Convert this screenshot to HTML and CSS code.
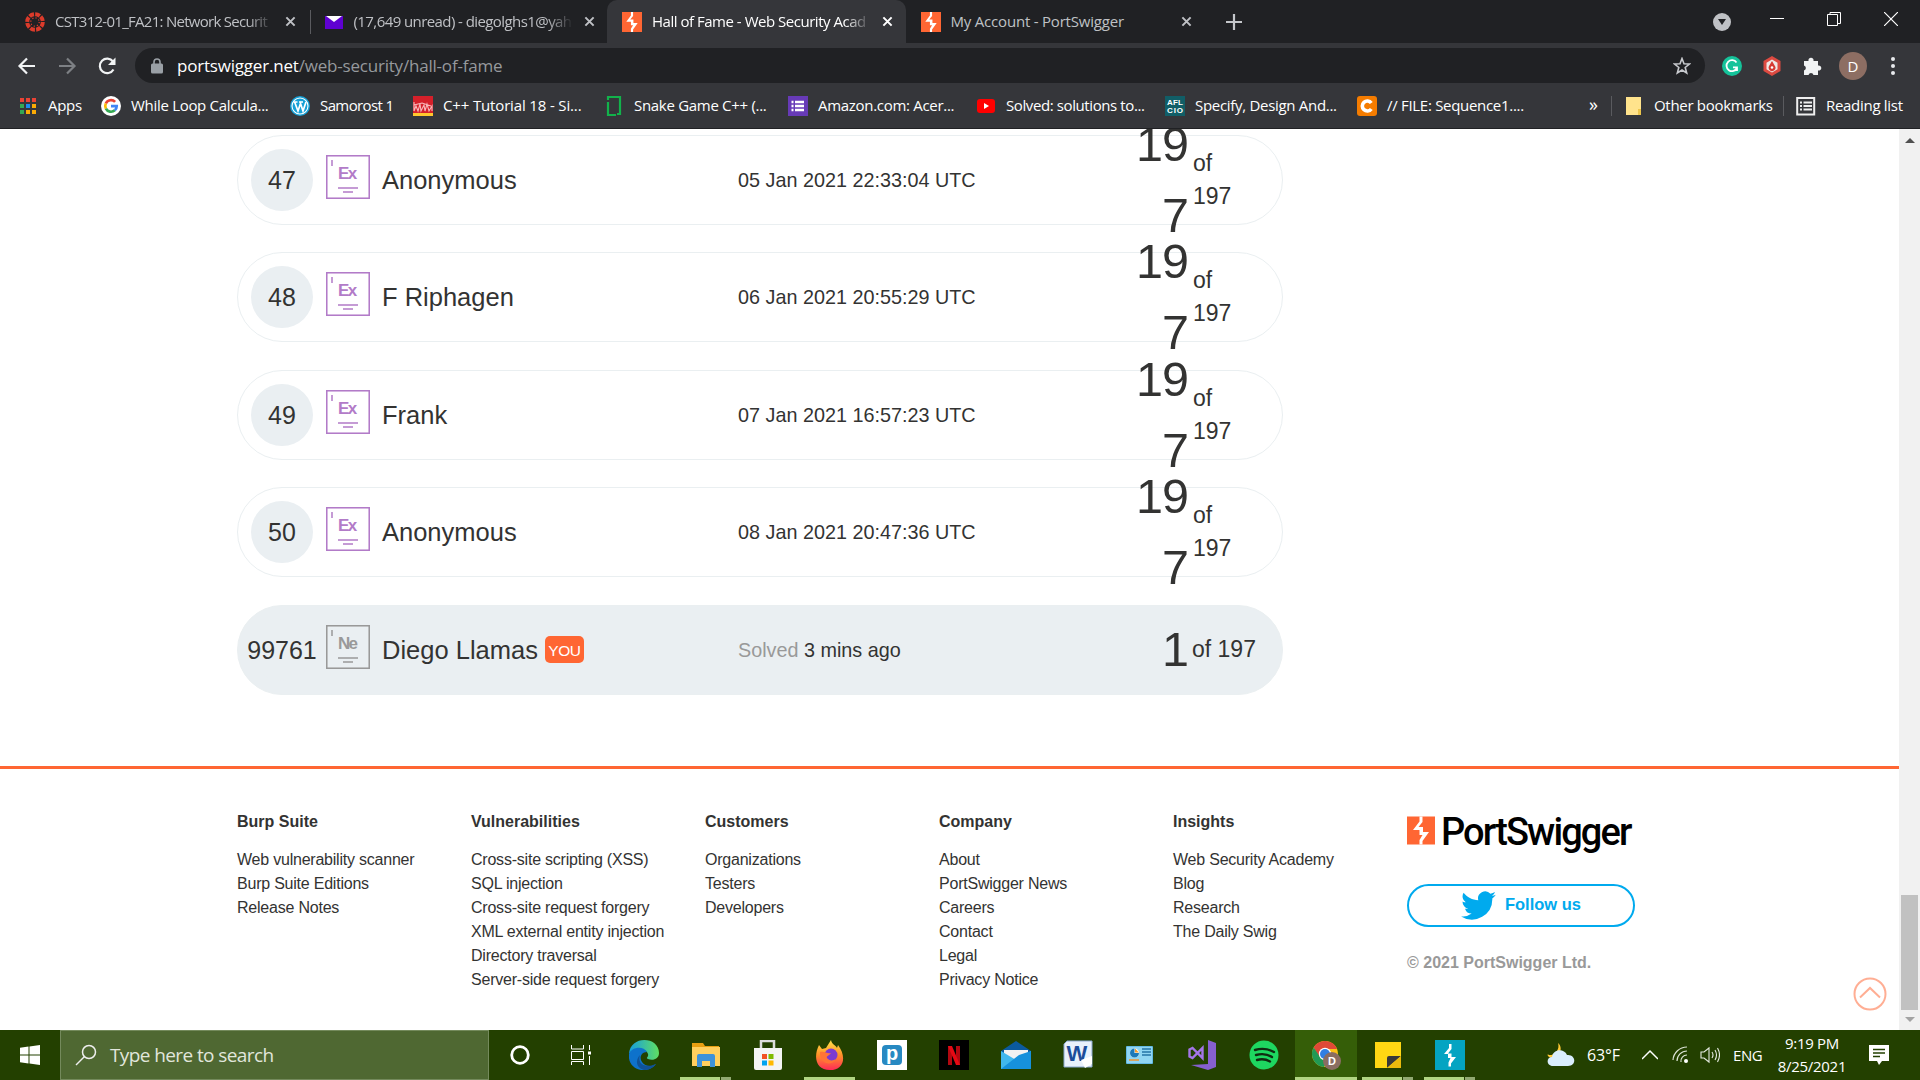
FILE: index.html
```html
<!DOCTYPE html>
<html lang="en">
<head>
<meta charset="utf-8">
<title>Hall of Fame - Web Security Academy</title>
<link rel="stylesheet" href="styles.css">
</head>
<body>
<svg class="defs" width="0" height="0">
  <symbol id="bolt" viewBox="0 0 28 28"><rect width="28" height="28" fill="#ff6633"/><path d="M12.500 0h3v5.500l-4 5h4.500v5h6l-6.500 9v3.500h-3v-4.500l3-5h-3v-5h-6.500l6.500-8.500z" fill="#fff"/></symbol>
  <symbol id="close" viewBox="0 0 12 12"><path d="M1.500 1.500l9 9M10.500 1.500l-9 9" stroke="currentColor" stroke-width="2.200"/></symbol>
  <symbol id="level" viewBox="0 0 44 44"><rect x=".75" y=".75" width="42.500" height="42.500" fill="none" stroke="currentColor" stroke-width="1.600"/><path d="M6 5v6M12 33h20M17 37h10" stroke="currentColor" stroke-width="1.500"/></symbol>
</svg>

<header class="chrome">
  <div class="tabs">
    <div class="tab"><svg class="fav" viewBox="0 0 20 20"><circle cx="10" cy="10" r="7.800" fill="none" stroke="#dc3b2b" stroke-width="4" stroke-dasharray="4.900 1.220"/><circle cx="10" cy="10" r="4.200" fill="none" stroke="#dc3b2b" stroke-width="1.200" stroke-dasharray="1.200 2.100"/></svg><span class="title t1">CST312-01_FA21: Network Securit</span><svg class="x"><use href="#close"/></svg></div>
    <div class="tab ruled"><svg class="fav" viewBox="0 0 20 20"><path d="M1 4h18v13H1z" fill="#5f01d1"/><path d="M2 4h16l-8 6z" fill="#fff"/></svg><span class="title t2">(17,649 unread) - diegolghs1@yah</span><svg class="x"><use href="#close"/></svg></div>
    <div class="tab active"><svg class="fav"><use href="#bolt"/></svg><span class="title t3">Hall of Fame - Web Security Acad</span><svg class="x"><use href="#close"/></svg></div>
    <div class="tab last"><svg class="fav"><use href="#bolt"/></svg><span class="title t4">My Account - PortSwigger</span><svg class="x"><use href="#close"/></svg></div>
    <svg class="plus" viewBox="0 0 16 16"><path d="M8 0v16M0 8h16" stroke="#c4c6ca" stroke-width="2.200"/></svg>
    <div class="window">
      <svg width="18" height="18" viewBox="0 0 18 18"><circle cx="9" cy="9" r="9" fill="#bfc1c5"/><path d="M5 6h8l-4 6z" fill="#202124"/></svg>
      <svg width="14" height="14" viewBox="0 0 14 14"><path d="M0 6.500h14" stroke="#fff"/></svg>
      <svg width="14" height="14" viewBox="0 0 14 14"><path d="M.5 2.500h10v11H.5zM3 2.500V.5h10.500v11h-3" fill="none" stroke="#fff"/></svg>
      <svg width="14" height="14" viewBox="0 0 14 14"><path d="M0 0l14 14M14 0L0 14" stroke="#fff" stroke-width="1.200"/></svg>
    </div>
  </div>

  <div class="toolbar">
    <svg class="nav" viewBox="0 0 20 20"><path d="M18 10H3M10 2.500L2.500 10l7.500 7.500" fill="none" stroke="#f1f3f4" stroke-width="2.200"/></svg>
    <svg class="nav" viewBox="0 0 20 20"><path d="M2 10h15M10 2.500l7.500 7.500-7.500 7.500" fill="none" stroke="#7d8084" stroke-width="2.200"/></svg>
    <svg class="nav" viewBox="0 0 20 20"><path d="M16.500 13.500a7.300 7.300 0 1 1-.5-8" fill="none" stroke="#f1f3f4" stroke-width="2.200"/><path d="M18.500 1.500v7.500h-7.500z" fill="#f1f3f4"/></svg>
    <div class="omnibox">
      <svg width="12" height="16" viewBox="0 0 12 16"><rect y="5.500" width="12" height="10" rx="1.500" fill="#9aa0a6"/><path d="M3 6V4a3 3 0 0 1 6 0v2" fill="none" stroke="#9aa0a6" stroke-width="1.600"/></svg>
      <span class="url"><b>portswigger.net</b>/web-security/hall-of-fame</span>
      <svg class="star" width="18" height="18" viewBox="0 0 18 18"><path d="M9 1.500l2 5.200 5.500.3-4.300 3.500 1.500 5.500L9 13l-4.700 3 1.500-5.500L1.500 7 7 6.700z" fill="none" stroke="#c8cace" stroke-width="1.600"/></svg>
    </div>
    <div class="extensions">
      <svg viewBox="0 0 20 20"><circle cx="10" cy="10" r="10" fill="#15c39a"/><path d="M14.500 6.500A5.500 5.500 0 1 0 15 12M15 15v-3.700h-4" fill="none" stroke="#fff" stroke-width="1.800"/></svg>
      <svg viewBox="0 0 20 20"><path d="M10 0l8.500 5v10L10 20l-8.500-5V5z" fill="#dc4a41"/><path d="M10 3.500l5.500 3.200v6.600L10 16.500l-5.500-3.200V6.700z" fill="#eee8e5"/><path d="M10 5l3.500 6a3.500 3.500 0 1 1-6.500-1z" fill="#d63a32"/><circle cx="10" cy="11.500" r="1.300" fill="#fff"/></svg>
      <svg viewBox="0 0 20 20"><path d="M2 5h4.500a2.600 2.600 0 1 1 5 0H16v4.500a2.600 2.600 0 1 1 0 5V19h-4.500a2.600 2.600 0 0 0-5 0H2v-4.500a2.600 2.600 0 0 0 0-5z" fill="#f1f3f4"/></svg>
      <span class="avatar">D</span>
      <svg class="menu" viewBox="0 0 20 20"><g fill="#e8eaed"><circle cx="10" cy="3" r="2"/><circle cx="10" cy="10" r="2"/><circle cx="10" cy="17" r="2"/></g></svg>
    </div>
  </div>

  <nav class="bookmarks">
    <a class="apps"><svg viewBox="0 0 20 20"><g><path d="M0 2h4v4H0zM6 2h4v4H6zM12 2h4v4h-4z" fill="#ea4335"/><path d="M0 8h4v4H0zM0 14h4v4H0z" fill="#34a853"/><path d="M6 8h4v4H6z" fill="#1a8cf0"/><path d="M12 8h4v4h-4zM6 14h4v4H6zM12 14h4v4h-4z" fill="#fbab05"/></g></svg><span>Apps</span></a>
    <a><svg viewBox="0 0 20 20"><circle cx="10" cy="10" r="10" fill="#fff"/><g fill="none" stroke-width="2.700"><path d="M4.800 7.500a5.700 5.700 0 0 1 9.300-1.600" stroke="#ea4335"/><path d="M4.900 12.600a5.700 5.700 0 0 1-.1-5.100" stroke="#fbbc05"/><path d="M4.900 12.600a5.700 5.700 0 0 0 8.900 1.700" stroke="#34a853"/><path d="M10 10.200h5.700a5.500 5.500 0 0 1-1.900 4.100" stroke="#4285f4"/></g></svg><span>While Loop Calcula...</span></a>
    <a><svg viewBox="0 0 20 20"><circle cx="10" cy="10" r="10" fill="#16a0d6"/><circle cx="10" cy="10" r="8" fill="none" stroke="#fff" stroke-width="1.100"/><path d="M3.500 6h4M9 6h4M4.800 6.500L8 15l2.500-7.500L13 15l3-9" fill="none" stroke="#fff" stroke-width="1.700"/></svg><span class="b2">Samorost 1</span></a>
    <a><svg viewBox="0 0 20 20"><path d="M0 0h20v20H0z" fill="#d5202a"/><path d="M0 17h20v3H0z" fill="#ffc82e"/><path d="M1 6v9l2-5 2 5 2-7 1 7 3-6 1 6 2-7 2 7 3-5v5M1 9l8-2 9 3" fill="none" stroke="#f8b7b9" stroke-width="1.100"/></svg><span class="b3">C++ Tutorial 18 - Si...</span></a>
    <a><svg viewBox="0 0 20 20"><path d="M4 4V1h12v17h-3M4 6v13h8" fill="none" stroke="#12b24b" stroke-width="2.200"/></svg><span class="b4">Snake Game C++ (...</span></a>
    <a><svg viewBox="0 0 20 20"><path d="M0 0h20v20H0z" fill="#673ab7"/><path d="M3.500 6h2M7 6h9M3.500 10h2M7 10h9M3.500 14h2M7 14h9" stroke="#fff" stroke-width="2.400"/></svg><span>Amazon.com: Acer...</span></a>
    <a><svg viewBox="0 0 20 20"><rect x="1" y="3" width="18" height="14" rx="3" fill="#f00"/><path d="M8 7l5 3-5 3z" fill="#fff"/></svg><span class="b6">Solved: solutions to...</span></a>
    <a><svg viewBox="0 0 20 20"><path d="M0 0h20v20H0z" fill="#115e67"/><g class="tiny"><text x="10" y="9" textLength="16">AFL</text><text x="10" y="17" textLength="16">CIO</text></g></svg><span>Specify, Design And...</span></a>
    <a><svg viewBox="0 0 20 20"><rect width="20" height="20" rx="3" fill="#f57c00"/><path d="M14.300 7a5 5 0 1 0 0 6" fill="none" stroke="#fff" stroke-width="3.600"/></svg><span>// FILE: Sequence1....</span></a>
    <span class="more">»</span>
    <a class="other"><svg viewBox="0 0 20 20"><path d="M2 1h15v18H2z" fill="#ffe38c"/><path d="M17 13h-3v6h3z" fill="#edc64b"/></svg><span>Other bookmarks</span></a>
    <a class="reading"><svg viewBox="0 0 20 20"><rect x="1.200" y="2" width="17" height="16.500" fill="none" stroke="#eee" stroke-width="2"/><path d="M4 6.500h2M7.500 6.500H16M4 10h2M7.500 10H16M4 13.500h2M7.500 13.500H16" stroke="#eee" stroke-width="1.800"/></svg><span>Reading list</span></a>
  </nav>
</header>

<div class="viewport">
  <div class="page">
    <main class="board">
      <div class="row"><span class="rank">47</span><span class="badge"><svg><use href="#level"/></svg><i>Ex</i></span><span class="name">Anonymous</span><span class="date">05 Jan 2021 22:33:04 UTC</span><span class="score">19<br>7</span><span class="of">of<br>197</span></div>
      <div class="row"><span class="rank">48</span><span class="badge"><svg><use href="#level"/></svg><i>Ex</i></span><span class="name">F Riphagen</span><span class="date">06 Jan 2021 20:55:29 UTC</span><span class="score">19<br>7</span><span class="of">of<br>197</span></div>
      <div class="row"><span class="rank">49</span><span class="badge"><svg><use href="#level"/></svg><i>Ex</i></span><span class="name">Frank</span><span class="date">07 Jan 2021 16:57:23 UTC</span><span class="score">19<br>7</span><span class="of">of<br>197</span></div>
      <div class="row"><span class="rank">50</span><span class="badge"><svg><use href="#level"/></svg><i>Ex</i></span><span class="name">Anonymous</span><span class="date">08 Jan 2021 20:47:36 UTC</span><span class="score">19<br>7</span><span class="of">of<br>197</span></div>
      <div class="row me"><span class="rank">99761</span><span class="badge"><svg><use href="#level"/></svg><i>Ne</i></span><span class="name">Diego Llamas<em>YOU</em></span><span class="date"><small>Solved</small> 3 mins ago</span><span class="score">1</span><span class="of">of 197</span></div>
    </main>
    <footer class="footer">
      <section><h3>Burp Suite</h3><a>Web vulnerability scanner</a><a>Burp Suite Editions</a><a>Release Notes</a></section>
      <section><h3>Vulnerabilities</h3><a>Cross-site scripting (XSS)</a><a>SQL injection</a><a>Cross-site request forgery</a><a>XML external entity injection</a><a>Directory traversal</a><a>Server-side request forgery</a></section>
      <section><h3>Customers</h3><a>Organizations</a><a>Testers</a><a>Developers</a></section>
      <section><h3>Company</h3><a>About</a><a>PortSwigger News</a><a>Careers</a><a>Contact</a><a>Legal</a><a>Privacy Notice</a></section>
      <section><h3>Insights</h3><a>Web Security Academy</a><a>Blog</a><a>Research</a><a>The Daily Swig</a></section>
      <section class="brand">
        <div class="logo"><svg width="28" height="29"><use href="#bolt"/></svg><span>PortSwigger</span></div>
        <div class="follow"><svg width="35" height="29" viewBox="0 0 24 20"><path d="M23.950 2.600c-.9.400-1.800.7-2.800.8 1-.6 1.800-1.600 2.200-2.700-1 .6-2 1-3.100 1.200a4.900 4.900 0 0 0-8.400 4.500C7.700 6.200 4.100 4.200 1.700 1.200a4.900 4.900 0 0 0 1.500 6.600c-.8 0-1.600-.2-2.200-.6 0 2.300 1.600 4.400 3.900 4.900-.7.200-1.500.2-2.200.1a4.900 4.900 0 0 0 4.600 3.400A9.900 9.900 0 0 1 0 17.500a14 14 0 0 0 21.500-12.400c1-.7 1.800-1.600 2.450-2.500z" fill="#00aaee"/></svg><span>Follow us</span></div>
        <p>© 2021 PortSwigger Ltd.</p>
      </section>
    </footer>
    <svg class="totop" viewBox="0 0 34 34"><circle cx="17" cy="17" r="15.500" fill="none" stroke="#ffae94" stroke-width="2"/><path d="M7 20.500L17 11l10 9.500" fill="none" stroke="#ffae94" stroke-width="2"/></svg>
  </div>
  <div class="scrollbar"><i class="up"></i><i class="thumb"></i><i class="down"></i></div>
</div>

<footer class="taskbar">
  <div class="start"><svg width="20" height="20" viewBox="0 0 20 20"><path d="M0 2.800l8.500-1.200v7.900H0zM9.500 1.400L20 0v9.500H9.500zM0 10.500h8.500v7.900L0 17.200zM9.500 10.500H20V20L9.500 18.600z" fill="#fff"/></svg></div>
  <div class="search"><svg width="22" height="22" viewBox="0 0 22 22"><circle cx="14" cy="8" r="6.500" fill="none" stroke="#eee" stroke-width="1.500"/><path d="M9.500 12.500L1 21" stroke="#eee" stroke-width="1.500"/></svg><span>Type here to search</span></div>
  <div class="task"><svg viewBox="0 0 30 30"><circle cx="15" cy="15" r="8.300" fill="none" stroke="#fff" stroke-width="2.800"/></svg></div>
  <div class="task"><svg viewBox="0 0 30 30"><path d="M4.500 5v4h12V5M4.500 11.500h12v8h-12zM4.500 25v-3.500h12V25M22.500 5v5M22.500 16v9" fill="none" stroke="#fff"/><path d="M21 11.500h3v3h-3z" fill="#fff"/></svg></div>
  <div class="task"><svg viewBox="0 0 30 30"><defs><linearGradient id="edge" x1="0" x2="1"><stop stop-color="#159de0"/><stop offset="1" stop-color="#60df62"/></linearGradient></defs><path d="M0 14C1-5 30-4 30 13c0 6-6 8-11 6-3-1 1-2 0-5C17 8 4 7 0 14z" fill="url(#edge)"/><path d="M0 14c3-8 15-8 18-2-6 0-8 6-5 10 3 5 10 5 14 2C19 35-2 31 0 14z" fill="#0e72cb"/><path d="M11 15c-3 8 4 14 16 9-3 5-9 6-12 6-8-2-9-10-4-15z" fill="#105297"/></svg></div>
  <div class="task"><svg viewBox="0 0 30 30"><path d="M1 3h11l2 3h14v5H1z" fill="#e8a012"/><path d="M1 7h28v19H1z" fill="#ffd05e"/><path d="M6 27V16q0-2 2-2h14q2 0 2 2v11h-5v-6h-8v6z" fill="#3d92d9"/></svg><b class="bar part"></b></div>
  <div class="task"><svg viewBox="0 0 30 30"><path d="M8 10V1h13v9" fill="none" stroke="#ddd" stroke-width="2.500"/><path d="M1 8h28v20q0 2-2 2H3q-2 0-2-2z" fill="#f4f4f4"/><path d="M9 14h5v5H9z" fill="#f25022"/><path d="M15.500 14h5v5h-5z" fill="#7fba00"/><path d="M9 20.500h5v5H9z" fill="#00a4ef"/><path d="M15.500 20.500h5v5h-5z" fill="#ffb900"/></svg></div>
  <div class="task"><svg viewBox="0 0 30 30"><defs><linearGradient id="fox" y2="1" x2="0"><stop stop-color="#ffe14b"/><stop offset=".5" stop-color="#ff9128"/><stop offset="1" stop-color="#ff2b58"/></linearGradient></defs><path d="M4 5l3 4 4-1 5-8c1 5 5 5 6 8l1-3c9 12 6 25-8 25C1 30-2 17 4 5z" fill="url(#fox)"/><circle cx="16" cy="15" r="6.500" fill="#7b3bd0"/><path d="M5 12c5-1 7 2 11 1-2 3-5 3-4 5 2 3 6 3 9 1-4 8-17 5-16-7z" fill="#ff7436"/></svg><b class="bar"></b></div>
  <div class="task"><svg viewBox="0 0 30 30"><path d="M0 0h30v30H0z" fill="#fff"/><rect x="5" y="5" width="20" height="20" rx="4" fill="#2789c2"/><text class="glyph p" x="15" y="20">p</text></svg></div>
  <div class="task"><svg viewBox="0 0 30 30"><path d="M0 0h30v30H0z"/><path d="M9 6h4v19H9zM17 6h4v19h-4z" fill="#b20710"/><path d="M9 6h4l8 19h-4z" fill="#e50914"/></svg></div>
  <div class="task"><svg viewBox="0 0 30 30"><path d="M0 11L15 1l15 10v8H0z" fill="#0b5a9f"/><path d="M3 10h24v9H3z" fill="#f2f2f2"/><path d="M0 11l15 9 15-9v18H0z" fill="#40b8ee"/><path d="M0 29l18-14 12-4v18z" fill="#1691dc"/></svg></div>
  <div class="task"><svg viewBox="0 0 30 30"><path d="M4 1h25v26H1V4z" fill="#e9f1fb" stroke="#8ba7d0"/><text class="glyph w" x="14" y="21">W</text><path d="M18 20l11-4v8l-7 4z" fill="#fff"/></svg></div>
  <div class="task"><svg viewBox="0 0 30 30"><rect x="1" y="6" width="27" height="18" rx="1" fill="#64bae4"/><path d="M2 7h25v16H2z" fill="#90d6f3"/><circle cx="9.500" cy="13" r="4.500" fill="#fff"/><path d="M9.500 8.500v4.500h4.500a4.500 4.500 0 1 1-4.500-4.500z" fill="#1d79b8"/><path d="M10 8.500v4h4z" fill="#f39b2d"/><path d="M17 9h9M17 12h9M17 15h9" stroke="#2476a8" stroke-width="1.500"/><path d="M4 20h10" stroke="#ef9430" stroke-width="1.500"/></svg></div>
  <div class="task"><svg viewBox="0 0 30 30"><path d="M21 0l8 3v24l-8 3-17-5 17-1z" fill="#8660cf"/><path d="M2.500 9.500l3-1.500 10 10V8l-10 10-3-1.500z" fill="none" stroke="#a576e8" stroke-width="2.400"/></svg></div>
  <div class="task"><svg viewBox="0 0 30 30"><circle cx="15" cy="15" r="14.500" fill="#1ed760"/><path d="M6 10q10-3 19 2M7 15q9-2.500 16 2M8 20q7-2 13 1.500" fill="none" stroke="#102b10" stroke-width="2.400" stroke-linecap="round"/></svg></div>
  <div class="task on"><svg viewBox="0 0 30 30"><circle cx="14" cy="14" r="13" fill="#fbc116"/><path d="M2.700 7.500A13 13 0 0 1 26 9H14l-6 8z" fill="#df4937"/><path d="M2.700 7.500A13 13 0 0 0 13 27l4-8-8-2z" fill="#229a55"/><circle cx="14" cy="14" r="6.200" fill="#fff"/><circle cx="14" cy="14" r="5" fill="#317fe2"/><circle cx="21" cy="21" r="9" fill="#8a6d62"/><text class="glyph d" x="21" y="25">D</text></svg><b class="bar wide"></b></div>
  <div class="task"><svg viewBox="0 0 30 30"><path d="M2 2h26v26H2z" fill="#ffd713"/><path d="M14 28V18q0-2 2-2h12z" fill="#383838"/><path d="M14 28l14-12v12z" fill="#eab90d"/></svg><b class="bar part"></b></div>
  <div class="task"><svg viewBox="0 0 30 30"><path d="M0 0h30v30H0z" fill="#04a4c2"/><path d="M14 4h2.500v5l-3.500 4.500h3.500v3.500h4.500l-5 6.500v3h-2.500v-4l2-4.500h-2.500v-4H9l5-6z" fill="#fff"/></svg><b class="bar part"></b></div>
  <div class="tray">
    <svg class="weather" viewBox="0 0 28 24"><path d="M11 0a9 9 0 0 1-9 12c-2-1-2 0 0 2 8 4 16-8 9-14z" fill="#ffc934"/><path d="M6 23c-7 0-7-9-1-9 1-8 12-9 15-2 9-1 10 11 1 11z" fill="#d9edfd"/></svg>
    <span class="temp">63°F</span>
    <svg class="caret" viewBox="0 0 16 16"><path d="M0 12l8-8 8 8" fill="none" stroke="#fff" stroke-width="1.500"/></svg>
    <svg class="wifi" viewBox="0 0 18 18"><g fill="none" stroke="#dce3d5" stroke-width="1.200"><path d="M1 14A14 14 0 0 1 15 1M5 15A10 10 0 0 1 15 5M9 16a6 6 0 0 1 6-7"/></g><circle cx="14" cy="15" r="2" fill="#fff"/></svg>
    <svg class="volume" viewBox="0 0 20 18"><path d="M1 6h3l5-4v14l-5-4H1zM12 6q2 3 0 6M15 4q3 5 0 10M17.500 2q4 7 0 14" fill="none" stroke="#e6ebe1" stroke-width="1.100"/></svg>
    <span class="lang">ENG</span>
    <span class="clock">9:19 PM<br>8/25/2021</span>
    <svg class="notice" viewBox="0 0 20 20"><path d="M0 0h20v16h-7l-3 4-2-4H0z" fill="#fff"/><path d="M4 4.500h12M4 8h12M4 11.500h7" stroke="#234000" stroke-width="1.400"/></svg>
  </div>
</footer>
</body>
</html>
```
FILE: styles.css
```css
* { box-sizing: border-box; }
body { margin: 0; width: 1920px; height: 1080px; overflow: hidden; background: #fff; font-family: "Liberation Sans", Arial, sans-serif; color: #333332; }
svg { display: block; flex: none; }
.defs { position: absolute; }

/* browser frame */
.chrome { height: 129px; background: #35363a; border-bottom: 1px solid #202124; font-family: "Open Sans", sans-serif; font-size: 15px; color: #fff; }
.tabs { display: flex; height: 43px; padding-left: 10px; background: #202124; }
.tab { display: flex; align-items: center; width: 298.500px; padding-left: 15px; color: #bfc1c5; }
.tab .fav { width: 20px; height: 20px; }
.title { width: 219px; margin: -2px 10px 0; white-space: nowrap; letter-spacing: -.45px; }
.t1 { letter-spacing: -.72px; }
.t2 { letter-spacing: -.58px; }
.t3 { letter-spacing: -.48px; }
.t4 { letter-spacing: -.2px; }
.t1, .t2, .t3 { -webkit-mask-image: linear-gradient(90deg, #000 88%, transparent); }
.tab .x { width: 11px; height: 11px; margin-left: 1px; }
.ruled { background: linear-gradient(#5a5b5f, #5a5b5f) 1px 10px / 1px 24px no-repeat; }
.last { background: linear-gradient(#5a5b5f, #5a5b5f) 298px 10px / 1px 24px no-repeat; }
.active { background: #35363a; border-radius: 10px 10px 0 0; color: #fff; }
.plus { width: 16px; height: 16px; margin: 14px 0 0 22px; }
.window { display: flex; align-items: center; margin-left: 471px; height: 38px; }
.window svg + svg { margin-left: 43px; }
.window svg:first-child { margin-top: 6px; }
.window svg:nth-child(2) { margin-left: 39px; }

.toolbar { display: flex; align-items: center; height: 45px; padding-left: 17px; }
.nav { width: 20px; height: 20px; margin-right: 20px; }
.omnibox { display: flex; align-items: center; width: 1570px; height: 35px; margin-left: -2px; padding: 0 14px 0 16px; border-radius: 18px; background: #202124; }
.url { flex: 1; margin-left: 14px; font-size: 17px; letter-spacing: -.2px; color: #96999d; }
.url b { font-weight: 400; color: #fff; }
.extensions { display: flex; align-items: center; gap: 20px; margin-left: 17px; }
.extensions svg { width: 20px; height: 20px; }
.extensions .menu { margin-left: -2px; }
.avatar { width: 28px; height: 28px; margin: 0 -2px 0 -3px; border-radius: 50%; background: #8d6e63; text-align: center; line-height: 28px; }

.bookmarks { display: grid; grid-template-columns: 81px 189px 123px 191px 184px 188px 189px 192px 232px 22px 172px 136px; align-items: center; height: 36px; padding-left: 20px; }
.bookmarks a { display: flex; align-items: center; gap: 10px; white-space: nowrap; letter-spacing: -.3px; }
.bookmarks a span { margin-top: -2px; }
.bookmarks svg { width: 20px; height: 20px; }
.bookmarks .apps { gap: 8px; }
.bookmarks .b2 { letter-spacing: -.6px; }
.bookmarks .b3 { letter-spacing: -.15px; }
.bookmarks .b6 { letter-spacing: -.4px; }
.more { font-size: 18px; margin-top: -4px; }
.bookmarks .other, .bookmarks .reading { height: 20px; border-left: 1px solid #5a5b5f; padding-left: 12px; }
.tiny { font: bold 8px "Liberation Sans", sans-serif; fill: #fff; text-anchor: middle; letter-spacing: 0; }

/* page */
.viewport { display: flex; height: 901px; }
.page { position: relative; width: 1899px; overflow: hidden; }
.board { display: flex; flex-direction: column; gap: 27.400px; width: 1046px; margin: 6px 0 0 237px; }
.row { display: grid; grid-template-columns: 75px 56px 356px 395px 55px 90px; grid-template-rows: 88px; align-items: center; height: 90px; padding-left: 13px; border: 1px solid #eaeff1; border-radius: 45px; white-space: nowrap; }
.rank { display: flex; align-items: center; justify-content: center; width: 62px; height: 62px; border-radius: 50%; background: #eaeff2; font-size: 25px; padding-top: 1px; }
.badge { position: relative; width: 44px; height: 44px; margin-top: -6px; color: #b27bc8; }
.badge svg { width: 44px; height: 44px; }
.badge i { position: absolute; left: 12px; top: 9px; font: bold 17px/20px "Liberation Sans", sans-serif; letter-spacing: -1.700px; }
.name { display: flex; align-items: center; font-size: 25.500px; padding-top: 1px; }
.name em { margin: -2px 0 0 7px; width: 39px; height: 27px; border-radius: 5px; background: #ff6633; color: #fff; text-align: center; font: 15.500px/29px "Liberation Sans", sans-serif; letter-spacing: -.4px; }
.date { font-size: 19.800px; padding-top: 1px; }
.date small { font-size: inherit; color: #999; }
.score { text-align: right; font-size: 48.500px; line-height: 71px; height: 142px; letter-spacing: -1px; }
.of { font-size: 23px; line-height: 33px; margin-left: 5px; }
.me { background: #eaeff2; }
.me .score { height: 71px; }
.me .of { margin-left: 4px; }
.me .badge { color: #999; }

.footer { display: grid; grid-template-columns: repeat(6, 234px); margin-top: 71px; padding: 41px 0 0 237px; border-top: 3px solid #ff6633; font-size: 16px; line-height: 24px; }
.footer h3 { margin: 0 0 14px; font-size: 16px; line-height: 24px; }
.footer a { display: block; letter-spacing: -.22px; white-space: nowrap; }
.logo { display: flex; height: 29px; margin-top: 6px; }
.logo span { margin-left: 6px; color: #000; font: 500 38px/32px Roboto, sans-serif; letter-spacing: -1.900px; }
.follow { display: flex; align-items: center; justify-content: center; width: 228px; height: 43px; margin-top: 39px; border: 2px solid #00aaee; border-radius: 22px; color: #00aaee; font-size: 16.500px; font-weight: 700; }
.follow svg { margin-right: 9px; }
.follow span { margin-top: -2px; }
.brand p { margin: 24px 0 0; color: #999; font-weight: 700; }
.totop { position: absolute; left: 1853px; top: 848px; width: 34px; height: 34px; }
.scrollbar { display: flex; flex-direction: column; align-items: center; width: 21px; background: #f1f1f1; }
.up, .down { border: 5px solid transparent; border-top-width: 0; border-bottom: 5px solid #505050; margin-top: 9px; }
.thumb { width: 17px; height: 115px; margin-top: 752px; background: #c1c1c1; }
.down { border-bottom-width: 0; border-top: 5px solid #a3a3a3; margin-top: 7px; }

/* taskbar */
.taskbar { display: flex; height: 50px; background: #234000; color: #fff; font-family: "Open Sans", sans-serif; font-size: 16px; }
.start { display: flex; align-items: center; width: 60px; padding-left: 20px; }
.search { display: flex; align-items: center; width: 429px; padding-left: 14px; background: #4f6832; border: 1px solid #748a5c; font-size: 19px; color: #e1e6dc; letter-spacing: -.6px; }
.search span { margin-left: 13px; }
.task { position: relative; display: flex; align-items: center; justify-content: center; width: 62px; }
.task svg { width: 30px; height: 30px; }
.on { background: #355e08; }
.bar { position: absolute; left: 5px; bottom: 0; width: 51px; height: 3px; background: #b1d583; }
.bar.part { background: linear-gradient(90deg, #b1d583 40px, #234000 40px, #234000 41px, #91a971 41px); }
.bar.wide { left: 0; width: 62px; }
.glyph { text-anchor: middle; fill: #fff; font-family: "Liberation Sans", sans-serif; font-weight: bold; }
.p { font-size: 20px; }
.w { font-size: 22px; fill: #1c4c9a; }
.d { font-size: 11px; }
.tray { display: flex; align-items: center; margin-left: 66px; white-space: nowrap; }
.weather { width: 28px; height: 24px; }
.temp { width: 36px; margin-left: 12px; letter-spacing: -.1px; }
.caret { width: 16px; height: 16px; margin-left: 19px; }
.wifi { width: 18px; height: 18px; margin-left: 14px; }
.volume { width: 20px; height: 18px; margin-left: 10px; }
.lang { width: 31px; margin-left: 13px; font-size: 15px; letter-spacing: -.4px; }
.clock { width: 90px; margin-left: 3px; text-align: center; font-size: 15px; line-height: 23px; letter-spacing: -.3px; }
.notice { width: 20px; height: 20px; margin-left: 12px; }
```
